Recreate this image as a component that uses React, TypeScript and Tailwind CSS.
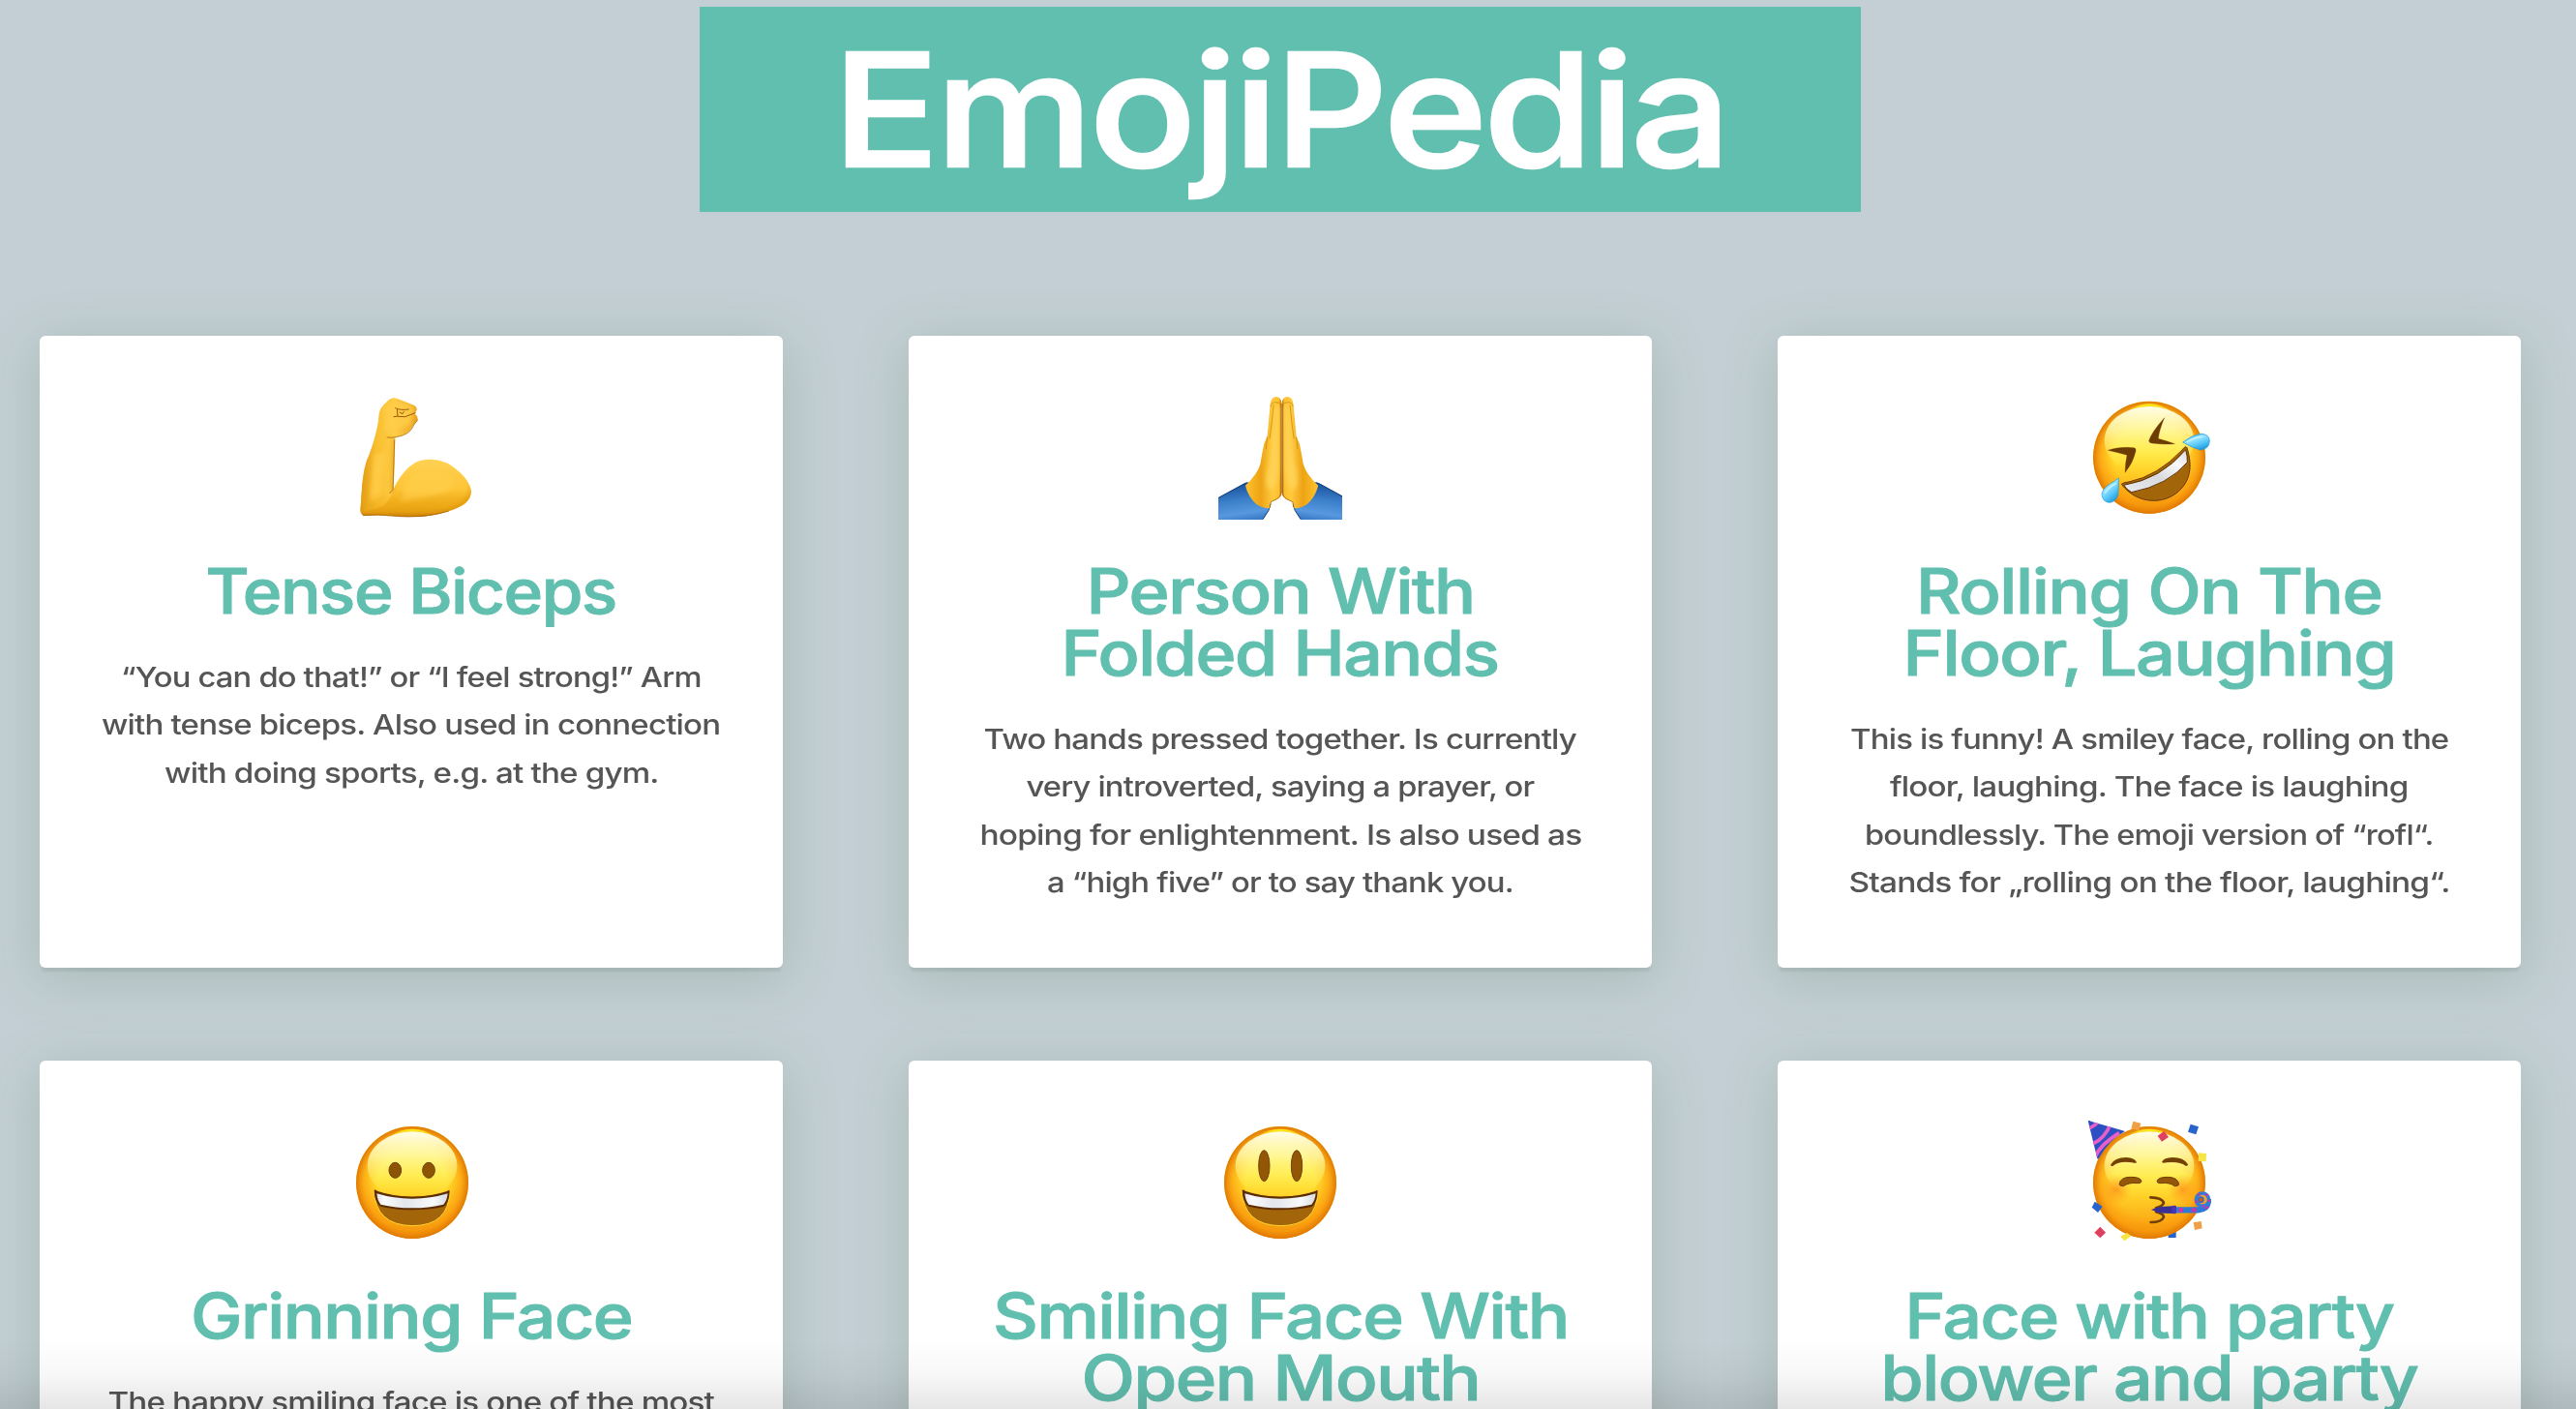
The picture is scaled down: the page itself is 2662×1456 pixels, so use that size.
import { useLayoutEffect, useRef, useState, type ReactNode } from "react";

type Line = { text: string; width: number };
type Entry = { name: string; icon: ReactNode; title: Line[]; body: Line[] };

/** One centred line of text, stretched horizontally to a set width. */
function FitLine({ text, width }: Line) {
  const ref = useRef<HTMLSpanElement>(null);
  const [scale, setScale] = useState(1);
  useLayoutEffect(() => {
    const natural = ref.current?.offsetWidth;
    if (natural) setScale(width / natural);
  }, [text, width]);
  return (
    <span className="flex justify-center">
      <span ref={ref} className="inline-block whitespace-nowrap" style={{ transform: `scaleX(${scale})` }}>
        {text}
      </span>
    </span>
  );
}

function Biceps() {
  return (
    <svg className="size-32" viewBox="63 57 384 384">
      <defs>
        <linearGradient id="arm" x1="0" x2="1">
          <stop offset="0" stopColor="#dd9410" />
          <stop offset=".3" stopColor="#f9bf2f" />
          <stop offset=".6" stopColor="#ffcd48" />
          <stop offset="1" stopColor="#e6a01a" />
        </linearGradient>
        <linearGradient id="muscle" x1="0" x2="0" y1="0" y2="1">
          <stop offset="0" stopColor="#ffd255" />
          <stop offset=".5" stopColor="#fec537" />
          <stop offset=".8" stopColor="#eea916" />
          <stop offset="1" stopColor="#c77a06" />
        </linearGradient>
        <linearGradient id="elbow" x1="0" x2="0" y1="0" y2="1">
          <stop offset="0" stopColor="#eea916" stopOpacity="0" />
          <stop offset=".75" stopColor="#eba514" stopOpacity=".6" />
          <stop offset="1" stopColor="#b96c04" />
        </linearGradient>
        <filter id="soft" x="-30%" y="-30%" width="160%" height="160%">
          <feGaussianBlur stdDeviation="6" />
        </filter>
        <clipPath id="armClip">
          <path d="M160 97Q184 66 197 64Q207 62 218 68L263 86Q274 91 272 101Q268 108 267 113Q277 121 275 132Q268 142 262 147Q256 161 247 169Q230 182 206 186Q205 220 203 262L200 348C213 312 250 265 285 257C320 249 360 258 382 275C415 298 441 330 441 355C440 383 415 402 370 415C325 430 275 436 205 430Q150 424 112 429Q97 427 97 409C102 370 100 310 116 260Q137 210 147 165Q154 140 155 112Z" />
        </clipPath>
      </defs>
      <g clipPath="url(#armClip)">
        <path fill="url(#muscle)" d="M90 250h360v190H90z" />
        <path fill="url(#arm)" d="M90 55h190v130H206L200 350Q185 390 160 402Q115 415 90 420Z" />
        <path fill="#ffcd48" opacity=".8" filter="url(#soft)" d="M170 90L220 75L265 90L250 150L200 160L175 175ZM140 240L175 230L160 370L125 390ZM250 310Q310 265 370 300Q410 345 350 360Q270 380 220 385Z" />
        <path fill="url(#elbow)" d="M90 350h360v90H90z" />
        <path fill="none" stroke="#c98009" strokeWidth="7" opacity=".6" filter="url(#soft)" d="M202 190L197 352M441 340Q442 390 370 415T205 430H100L97 400" />
      </g>
      <path fill="none" stroke="#a35c05" strokeWidth="2.5" strokeLinecap="round" opacity=".85" d="M180 186Q195 188 208 185Q253 178 263 147L274 133M203 194L198 348Q195 355 188 358M105 427Q150 424 205 430Q285 438 370 415" />
      <path fill="none" stroke="#9a5905" strokeWidth="3" strokeLinecap="round" strokeLinejoin="round" d="M206 95Q220 103 247 99M211 100L213 120L201 122M214 121L236 122Q252 116 267 110M219 108L228 113L232 106" />
    </svg>
  );
}

function FoldedHands() {
  const half = (
    <>
      <path fill="url(#sleeve)" d="M86 373L166 330Q174 325 182 327L250 395Q248 402 243 412L224 442H86Z" />
      <path fill="none" stroke="#103b78" strokeWidth="3" d="M88 373L170 328Q178 325 184 328M249 392L243 412L225 440" />
      <path
        fill="url(#hand)"
        d="M283 78Q281 61 267 60Q250 60 248 83L239 180Q234 195 229 205Q223 235 217 269Q208 300 171 335Q179 370 206 394Q226 407 246 406L250 386L272 377Q283 370 283 358Z"
      />
      <path fill="#ffd458" opacity=".85" filter="url(#handSoft)" d="M261 92Q267 80 277 92L275 280Q270 348 247 350Q225 330 244 270Q258 180 261 92Z" />
      <path fill="none" stroke="#d18b0b" strokeWidth="3" opacity=".8" d="M249 91Q251 76 265 77Q277 77 282 86M258 85Q254 140 246 190M239 185Q236 205 235 222" />
      <path fill="none" stroke="#9c5606" strokeWidth="3" opacity=".7" d="M282 82V358Q280 371 268 377L250 386L246 404" />
    </>
  );
  return (
    <svg className="size-32" viewBox="87 57 384 384">
      <defs>
        <linearGradient id="hand" x1="0" x2="1">
          <stop offset="0" stopColor="#ffc32e" />
          <stop offset=".42" stopColor="#eda315" />
          <stop offset=".75" stopColor="#ffc93e" />
          <stop offset=".93" stopColor="#fdbf30" />
          <stop offset="1" stopColor="#b8720a" />
        </linearGradient>
        <linearGradient id="sleeve" x1=".4" x2=".6" y1="0" y2="1">
          <stop offset="0" stopColor="#174f96" />
          <stop offset=".45" stopColor="#3c7fca" />
          <stop offset=".8" stopColor="#5799df" />
          <stop offset="1" stopColor="#3a7bc7" />
        </linearGradient>
        <filter id="handSoft" x="-40%" y="-20%" width="180%" height="140%">
          <feGaussianBlur stdDeviation="6" />
        </filter>
      </defs>
      {half}
      <g transform="translate(567.5 0) scale(-1 1)">{half}</g>
    </svg>
  );
}

function Face({ id, cx, cy }: { id: string; cx: number; cy: number }) {
  return (
    <>
      <defs>
        <linearGradient id={`${id}b`} x1="0" x2="0" y1="0" y2="1">
          <stop offset="0" stopColor="#fff13d" />
          <stop offset=".45" stopColor="#ffe42f" />
          <stop offset=".65" stopColor="#ffcb25" />
          <stop offset=".85" stopColor="#faab15" />
          <stop offset="1" stopColor="#dc8508" />
        </linearGradient>
        <radialGradient id={`${id}e`}>
          <stop offset=".62" stopColor="#ff9d0c" stopOpacity="0" />
          <stop offset=".86" stopColor="#fb990c" stopOpacity=".7" />
          <stop offset="1" stopColor="#e07804" />
        </radialGradient>
        <linearGradient id={`${id}h`} x1="0" x2="0" y1="0" y2="1">
          <stop offset="0" stopColor="#fffde8" />
          <stop offset=".35" stopColor="#fff9a8" stopOpacity=".85" />
          <stop offset="1" stopColor="#ffef45" stopOpacity="0" />
        </linearGradient>
        <linearGradient id={`${id}t`} x1="0" x2="0" y1="0" y2="1">
          <stop offset="0" stopColor="#fff01c" />
          <stop offset=".25" stopColor="#ffe31c" stopOpacity="0" />
        </linearGradient>
      </defs>
      <circle cx={cx} cy={cy} r="174" fill={`url(#${id}b)`} />
      <circle cx={cx} cy={cy} r="174" fill={`url(#${id}e)`} />
      <ellipse cx={cx} cy={cy - 90} rx="92" ry="76" fill={`url(#${id}t)`} />
      <ellipse cx={cx} cy={cy - 52} rx="139" ry="106" fill={`url(#${id}h)`} />
    </>
  );
}

function Grin({ id, dx = 0 }: { id: string; dx?: number }) {
  return (
    <g transform={`translate(${dx} 0)`}>
      <defs>
        <linearGradient id={`${id}teeth`} x1="0" x2="1">
          <stop offset="0" stopColor="#dfe1e6" />
          <stop offset=".1" stopColor="#fbfbfc" />
          <stop offset=".4" stopColor="#e3e6ea" />
          <stop offset=".8" stopColor="#f8f9fa" />
          <stop offset="1" stopColor="#d7dade" />
        </linearGradient>
      </defs>
      <path fill="#a3650a" stroke="#ffd52e" strokeWidth="3" d="M110 269Q114 269 121 273Q170 288 228 288T336 273Q343 268 344 272Q342 380 228 380Q113 378 110 269Z" />
      <path fill="#5b2c02" d="M110 269Q114 268 121 273Q170 290 228 290T336 273Q344 267 344 274Q342 310 325 321Q280 331 228 331T130 320Q111 307 110 269Z" />
      <path fill={`url(#${id}teeth)`} d="M118 280Q170 296 228 296T338 280Q336 302 325 314Q280 325 228 325T130 314Q120 302 118 280Z" />
    </g>
  );
}

function Grinning() {
  return (
    <svg className="size-32" viewBox="33 54 384 384">
      <Face id="g" cx={228} cy={246} />
      <g fill="#8e5405" stroke="#70400a" strokeWidth="3">
        <ellipse cx="175" cy="208" rx="19" ry="24" />
        <ellipse cx="279" cy="208" rx="19" ry="24" />
      </g>
      <Grin id="g" />
    </svg>
  );
}

function OpenMouth() {
  return (
    <svg className="size-32" viewBox="42 54 384 384">
      <Face id="o" cx={234} cy={246} />
      <g fill="#915706" stroke="#75430a" strokeWidth="3">
        <ellipse cx="184" cy="194" rx="17" ry="48" />
        <ellipse cx="285" cy="194" rx="17" ry="48" />
      </g>
      <Grin id="o" dx={6} />
    </svg>
  );
}

function Rolling() {
  return (
    <svg className="size-32" viewBox="51 57 384 384">
      <defs>
        <linearGradient id="tear" x1=".2" x2=".8" y1="0" y2="1">
          <stop offset="0" stopColor="#38b4ee" />
          <stop offset=".35" stopColor="#9be6ff" />
          <stop offset=".65" stopColor="#54c6fa" />
          <stop offset="1" stopColor="#168fd4" />
        </linearGradient>
        <linearGradient id="rteeth" x1="0" x2="1" y1="1" y2="0">
          <stop offset="0" stopColor="#e8e9ec" />
          <stop offset=".45" stopColor="#d8dade" />
          <stop offset=".75" stopColor="#fafafb" />
          <stop offset="1" stopColor="#d9dade" />
        </linearGradient>
      </defs>
      <Face id="r" cx={243} cy={248} />
      <g fill="#6d3b04" stroke="#6d3b04" strokeWidth="1" strokeLinejoin="round">
        <path d="M290 125Q250 170 242 196Q243 204 252 204Q290 209 322 206Q300 198 271 190Q273 165 290 125Z" />
        <path d="M115 226Q150 214 195 218Q203 219 201 229Q193 265 168 295Q169 265 174 241Q145 233 115 226Z" />
      </g>
      <path fill="#a3650a" stroke="#6a3803" strokeWidth="3" d="M157 331Q165 324 180 324Q270 305 345 225Q356 210 360 218C378 275 370 320 335 352C290 395 205 395 157 331Z" />
      <path fill="url(#rteeth)" stroke="#5b2e03" strokeWidth="3" d="M164 334Q280 315 356 224Q362 243 361 263Q300 335 188 356Q173 348 164 334Z" />
      <g fill="url(#tear)" stroke="#1795d8" strokeWidth="2">
        <path d="M347 201Q375 179 402 175Q430 175 430 199Q428 222 402 225Q378 219 347 201Z" />
        <path d="M148 312Q148 345 146 366Q137 388 118 388Q98 385 96 362Q99 344 121 330Q138 320 148 312Z" />
      </g>
      <path fill="none" stroke="#d7f6ff" strokeWidth="5" strokeLinecap="round" opacity=".7" d="M362 199Q385 184 407 184M140 329Q119 339 107 357" />
    </svg>
  );
}

function Party() {
  return (
    <svg className="size-32" viewBox="51 54 384 384">
      <defs>
        <clipPath id="hat">
          <path d="M53 54Q57 53 62 56L168 87Q118 113 86 172Q82 176 81 168Z" />
        </clipPath>
        <radialGradient id="blush">
          <stop offset="0" stopColor="#ff8a1c" stopOpacity=".75" />
          <stop offset="1" stopColor="#ff9a1c" stopOpacity="0" />
        </radialGradient>
      </defs>
      <rect x="302" y="392" width="24" height="25" fill="#2464cf" />
      <Face id="p" cx={243} cy={246} />
      <g clipPath="url(#hat)">
        <path fill="#2e4ec4" d="M45 45h130v135H45z" />
        <path fill="none" stroke="#e85fc9" strokeWidth="11" d="M54 80Q75 70 88 55M68 126Q105 110 124 63M76 165Q90 130 150 92" />
      </g>
      <circle cx="140" cy="268" r="48" fill="url(#blush)" />
      <circle cx="348" cy="268" r="48" fill="url(#blush)" />
      <g fill="#734006">
        <path d="M123 191Q135 168 172 168Q198 169 204 184Q201 187 190 184Q150 178 130 195Q124 196 123 191Z" />
        <path d="M363 190Q351 168 315 168Q288 169 282 182Q285 187 296 184Q336 179 356 194Q362 196 363 190Z" />
      </g>
      <g fill="#94570a" stroke="#70400a" strokeWidth="3">
        <path d="M150 252Q153 229 185 229Q217 229 219 242Q217 250 207 248Q180 245 163 257Q152 258 150 252Z" />
        <path d="M335 252Q332 229 300 229Q270 229 267 242Q268 250 280 248Q306 245 322 257Q333 258 335 252Z" />
      </g>
      <path fill="none" stroke="#714006" strokeWidth="8" strokeLinecap="round" strokeLinejoin="round" d="M247 292Q283 293 288 309Q286 318 264 325M264 337Q289 344 288 353Q281 369 248 369" />
      <path fill="#393097" d="M249 330Q268 321 288 320L318 319V342L288 341Q267 340 249 330Z" />
      <path fill="none" stroke="#2e7bd6" strokeWidth="19" d="M326 331H395Q427 328 426 297" />
      <path fill="none" stroke="#d62ca9" strokeWidth="13" strokeDasharray="13 27" d="M335 331H395Q427 328 426 297" />
      <rect x="313" y="317" width="14" height="26" rx="4" fill="#4b35b2" />
      <circle cx="408" cy="299" r="20" fill="#f3a02d" stroke="#2f7fda" strokeWidth="11" />
      <circle cx="408" cy="299" r="20" fill="none" stroke="#d62ca9" strokeWidth="7" strokeDasharray="7 19" />
      <circle cx="403" cy="299" r="8" fill="#c35e21" stroke="#3268c9" strokeWidth="4" />
      <path fill="#efa044" d="M193 56L217 62L211 85L187 79ZM380 370L404 366L407 388L384 393Z" />
      <path fill="#e0405f" d="M289 87L303 105L282 119L269 101ZM91 383L108 401L91 418L73 401Z" />
      <path fill="#2864cb" d="M371 65L396 73L388 97L363 89ZM74 305L98 320L84 339L65 323Z" />
      <path fill="#f7e447" d="M396 154L420 156L419 181L395 179ZM153 413L174 402Q183 407 187 412L166 427Z" />
    </svg>
  );
}

const entries: Entry[] = [
  {
    name: "biceps",
    icon: <Biceps />,
    title: [{ text: "Tense Biceps", width: 424 }],
    body: [
      { text: "“You can do that!” or “I feel strong!” Arm", width: 600 },
      { text: "with tense biceps. Also used in connection", width: 639 },
      { text: "with doing sports, e.g. at the gym.", width: 511 },
    ],
  },
  {
    name: "hands",
    icon: <FoldedHands />,
    title: [
      { text: "Person With", width: 401 },
      { text: "Folded Hands", width: 452 },
    ],
    body: [
      { text: "Two hands pressed together. Is currently", width: 612 },
      { text: "very introverted, saying a prayer, or", width: 525 },
      { text: "hoping for enlightenment. Is also used as", width: 622 },
      { text: "a “high five” or to say thank you.", width: 482 },
    ],
  },
  {
    name: "rolling",
    icon: <Rolling />,
    title: [
      { text: "Rolling On The", width: 481 },
      { text: "Floor, Laughing", width: 509 },
    ],
    body: [
      { text: "This is funny! A smiley face, rolling on the", width: 618 },
      { text: "floor, laughing. The face is laughing", width: 535 },
      { text: "boundlessly. The emoji version of “rofl“.", width: 587 },
      { text: "Stands for „rolling on the floor, laughing“.", width: 621 },
    ],
  },
  {
    name: "grinning",
    icon: <Grinning />,
    title: [{ text: "Grinning Face", width: 456 }],
    body: [{ text: "The happy smiling face is one of the most", width: 626 }],
  },
  {
    name: "open",
    icon: <OpenMouth />,
    title: [
      { text: "Smiling Face With", width: 595 },
      { text: "Open Mouth", width: 412 },
    ],
    body: [],
  },
  {
    name: "party",
    icon: <Party />,
    title: [
      { text: "Face with party", width: 505 },
      { text: "blower and party", width: 555 },
    ],
    body: [],
  },
];

function Card({ entry }: { entry: Entry }) {
  return (
    <article className="flex h-[653px] flex-col items-center rounded-[6px] bg-white pt-[62px] shadow-[0_6px_2px_-2px_rgba(60,75,75,0.1),0_10px_54px_rgba(110,135,110,0.3)]">
      {entry.icon}
      <h2 className="mt-[42px] text-[64px] leading-[64px] font-medium tracking-[-0.02em] text-[#61bfaf] [-webkit-text-stroke:1px_#61bfaf]">
        {entry.title.map((line) => (
          <FitLine key={line.text} {...line} />
        ))}
      </h2>
      <p className="mt-8 text-[29px] leading-[49.4px] font-medium tracking-[-0.025em] text-[#555555]">
        {entry.body.map((line) => (
          <FitLine key={line.text} {...line} />
        ))}
      </p>
    </article>
  );
}

export default function App() {
  return (
    <div className="relative h-[1456px] w-[2662px] overflow-hidden bg-[#c3cfd4] pt-[7px] pl-[41px] font-['Inter',sans-serif]">
      <h1 className="ml-[682px] h-[212px] w-[1200px] bg-[#61bfaf] text-[162px] leading-[212px] font-medium tracking-[-0.02em] text-white [-webkit-text-stroke:2.5px_white]">
        <FitLine text="EmojiPedia" width={925} />
      </h1>
      <main className="mt-32 grid w-[2564px] grid-cols-3 gap-x-[130px] gap-y-24">
        {entries.map((entry) => (
          <Card key={entry.name} entry={entry} />
        ))}
      </main>
      <div className="absolute inset-x-0 bottom-0 h-[72px] bg-linear-to-b from-black/0 via-black/3 to-black/10" />
    </div>
  );
}
